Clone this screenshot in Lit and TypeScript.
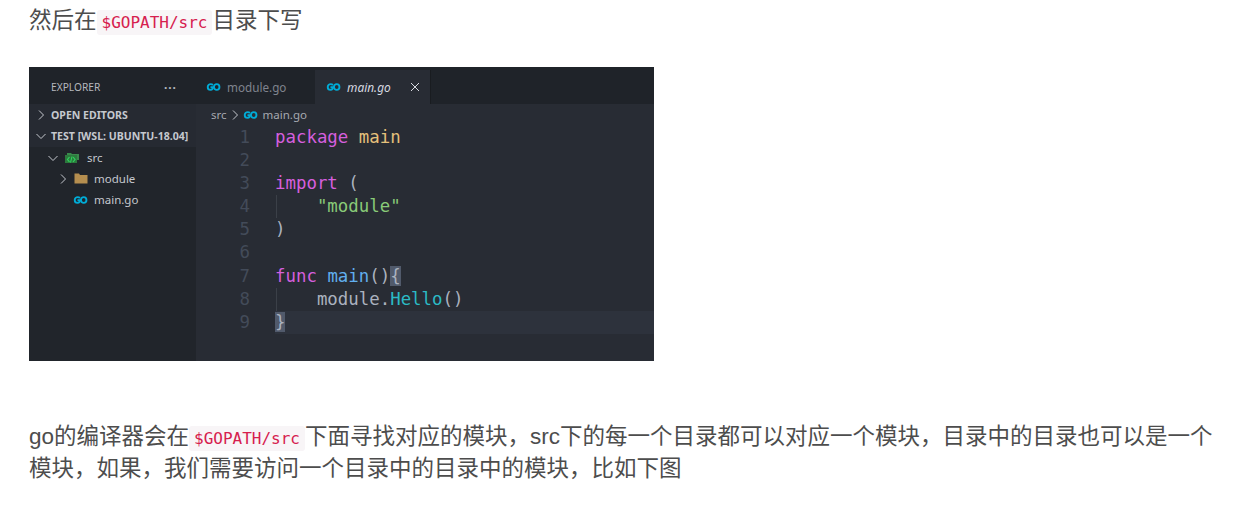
import { LitElement, html, css } from "lit";
import { customElement } from "lit/decorators.js";

const goIcon = html`<svg class="go" viewBox="0 0 16 9" width="15" height="8"><g fill="none" stroke="#00acd7" stroke-width="2.1"><path d="M7.4 2.2 C6.6 1.5 5.8 1.2 4.9 1.2 C3 1.2 1.5 2.6 1.5 4.5 C1.5 6.4 2.9 7.8 4.6 7.8 C5.7 7.8 6.5 7.3 7.1 6.5 L7.4 4.8 H4.6"/><ellipse cx="11.6" cy="4.5" rx="3.1" ry="3.2"/></g></svg>`;
const chevR = html`<svg class="chev" viewBox="0 0 10 10" width="10" height="10"><path d="M3 .5 L7.5 5 L3 9.5" fill="none" stroke="#c5c8ce" stroke-width="1"/></svg>`;
const chevD = html`<svg class="chev" viewBox="0 0 10 10" width="10" height="10"><path d="M.5 3 L5 7.5 L9.5 3" fill="none" stroke="#c5c8ce" stroke-width="1"/></svg>`;

@customElement("app-root")
export class AppRoot extends LitElement {
  static styles = css`
    :host { display: block; width: 1234px; height: 506px; overflow: hidden; background: #fff; padding-left: 29px; box-sizing: border-box; font-family: "Liberation Sans", "Noto Sans CJK SC", sans-serif; color: #4d4d4d; font-size: 22.5px; }
    p { margin: 0; line-height: 32px; width: 1190px; }
    .p1 { padding-top: 5px; }
    .p2 { margin-top: 60px; }
    code { font-family: "DejaVu Sans Mono", monospace; font-size: 16px; line-height: 1; color: #d6204e; background: #f8f5f7; padding: 3px 5px; border-radius: 3px; }
    .shot { margin-top: 30px; width: 625px; height: 294px; background: #21252b; display: grid; grid-template-columns: 167px 1fr; grid-template-rows: 37px 1fr; font-family: "Noto Sans", sans-serif; font-size: 11.5px; color: #c5c8ce; overflow: hidden; }
    .exp { display: flex; align-items: center; justify-content: space-between; padding: 3px 19px 0 22px; font-size: 10.2px; color: #b5b8be; background: #1f2329; }
    .dots { font-size: 12px; letter-spacing: 1px; font-weight: 700; }
    .tabs { display: flex; align-items: stretch; background: #1f2329; }
    .tab { display: flex; align-items: center; gap: 6px; padding: 3px 0 0 10px; color: #7f848e; font-size: 11.7px; box-sizing: border-box; }
    .tab.first { width: 119px; }
    .tab.active { background: #282c34; color: #d7dae0; width: 116px; padding: 0 10px 0 11px; margin-top: 3px; font-style: italic; font-size: 11.9px; border-right: 1px solid #191c20; }
    .x { margin-left: auto; font-style: normal; display: flex; }
    .side { display: flex; flex-direction: column; }
    .heads { background: #262a32; height: 43px; flex: none; box-sizing: border-box; }
    .row { height: 21.2px; display: flex; align-items: center; gap: 5px; padding-left: 7px; white-space: nowrap; }
    .hd { font-weight: 700; font-size: 10.55px; color: #c5c8ce; }
    .in1 { padding-left: 19px; gap: 6px; }
    .in2 { padding-left: 29px; gap: 6px; }
    .in3 { padding-left: 44px; gap: 6px; }
    .editor { background: #282c34; display: flex; flex-direction: column; }
    .crumbs { height: 21px; flex: none; display: flex; align-items: center; gap: 3px; padding-left: 15px; color: #a6a9b0; font-size: 11.5px; margin-bottom: 1px; }
    .crumbs .go { margin: 0 2px 0 0; }
    .code { font-family: "DejaVu Sans Mono", monospace; font-size: 17.4px; line-height: 23.1px; }
    .ln { display: flex; height: 23.1px; white-space: pre; }
    .num { width: 54px; text-align: right; color: #434b59; flex: none; }
    .txt { margin-left: 25px; flex: 1; color: #abb2bf; position: relative; }
    .cur .txt { background: #2d323c; }
    .guide { position: absolute; left: 1px; top: 0; bottom: 0; width: 1px; background: #3b4048; }
    .kw2 { color: #d55fde; }
    .yl { color: #e5c07b; }
    .gr { color: #89ca78; }
    .bl { color: #61afef; }
    .cy { color: #2bbac5; }
    .br { background: #515a6b; }
    .go { flex: none; }
  `;

  render() {
    const lines = [
      html`<span class="kw2">package</span> <span class="yl">main</span>`,
      html``,
      html`<span class="kw2">import</span> (`,
      html`<span class="guide"></span>    <span class="gr">"module"</span>`,
      html`)`,
      html``,
      html`<span class="kw2">func</span> <span class="bl">main</span>()<span class="br">{</span>`,
      html`<span class="guide"></span>    module.<span class="cy">Hello</span>()`,
      html`<span class="br">}</span>`,
    ];
    return html`
      <p class="p1">然后在<code>$GOPATH/src</code>目录下写</p>
      <div class="shot">
        <div class="exp"><span>EXPLORER</span><span class="dots">···</span></div>
        <div class="tabs">
          <div class="tab first">${goIcon}<span>module.go</span></div>
          <div class="tab active">${goIcon}<span>main.go</span>
            <span class="x"><svg viewBox="0 0 10 10" width="10" height="10"><path d="M1 1 L9 9 M9 1 L1 9" stroke="#d7dae0" stroke-width="1"/></svg></span>
          </div>
        </div>
        <div class="side">
          <div class="heads">
            <div class="row hd">${chevR}<span>OPEN EDITORS</span></div>
            <div class="row hd">${chevD}<span>TEST [WSL: UBUNTU-18.04]</span></div>
          </div>
          <div class="row in1">${chevD}
            <svg viewBox="0 0 17 12" width="17" height="12"><path d="M1 3 L1 11 H13 V3 Z" fill="#2c7a3d"/><path d="M3 3 V1 H7 L8 2 H15 V8 H13 V3 Z" fill="#3a8a4c"/><path d="M5.5 5 L3.5 7.5 L5.5 10 M9 5 L11 7.5 L9 10" fill="none" stroke="#2fd45e" stroke-width="1.2"/><path d="M8 4.5 L6.5 10.5" stroke="#2fd45e" stroke-width="1"/></svg>
            <span>src</span></div>
          <div class="row in2">${chevR}
            <svg viewBox="0 0 14 11" width="14" height="11"><path d="M.5 .5 H5 L6 2 H13.5 V10.5 H.5 Z" fill="#b58e4f"/></svg>
            <span>module</span></div>
          <div class="row in3">${goIcon}<span>main.go</span></div>
        </div>
        <div class="editor">
          <div class="crumbs"><span>src</span>${chevR}${goIcon}<span>main.go</span></div>
          <div class="code">
            ${lines.map((l, i) => html`<div class="ln ${i === 8 ? "cur" : ""}"><span class="num">${i + 1}</span><span class="txt">${l}</span></div>`)}
          </div>
        </div>
      </div>
      <p class="p2">go的编译器会在<code>$GOPATH/src</code>下面寻找对应的模块，src下的每一个目录都可以对应一个模块，目录中的目录也可以是一个模块，如果，我们需要访问一个目录中的目录中的模块，比如下图</p>
    `;
  }
}
